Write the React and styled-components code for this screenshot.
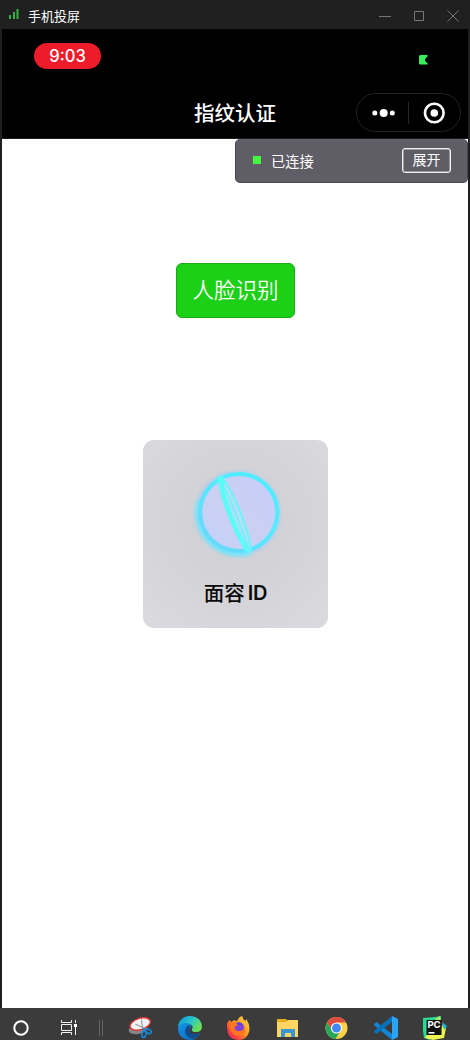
import React from 'react';
import styled, { createGlobalStyle } from 'styled-components';

const Global = createGlobalStyle`
  * { box-sizing: border-box; }
  body { margin: 0; background: #202020; font-family: Inter, "Noto Sans CJK SC", sans-serif; }
  svg { display: block; flex: none; }
`;

const Window = styled.div`
  width: 470px;
  height: 1040px;
  display: flex;
  flex-direction: column;
  background: #202020;
  overflow: hidden;
`;

const TitleBar = styled.header`
  height: 29px;
  flex: none;
  display: flex;
  align-items: center;
  padding: 2px 11px 0 9px;
  color: #fff;
`;

const WindowName = styled.span`
  margin-left: 9px;
  font: 400 13px/18px "Noto Sans CJK SC", sans-serif;
  flex: 1;
`;

const Controls = styled.div`
  display: flex;
  gap: 22px;
`;

const Phone = styled.main`
  flex: 1;
  margin: 0 2px;
  background: #fff;
  display: flex;
  flex-direction: column;
  align-items: center;
`;

const PhoneTop = styled.div`
  width: 100%;
  height: 110px;
  flex: none;
  background: #000;
  border-bottom: 1px solid #1c1c1c;
`;

const StatusBar = styled.div`
  height: 58px;
  display: flex;
  justify-content: space-between;
  padding: 14px 40px 0 32px;
`;

const Clock = styled.div`
  width: 67px;
  height: 26px;
  border-radius: 13px;
  background: #ee1c2b;
  color: #fff;
  font: 500 16.6px/26px Inter, sans-serif;
  text-align: center;
`;

const NavBar = styled.div`
  height: 51px;
  display: grid;
  grid-template-columns: 1fr auto 1fr;
  align-items: center;
  padding: 0 7px;
`;

const PageTitle = styled.h1`
  grid-column: 2;
  margin: 0;
  padding-bottom: 2px;
  color: #fff;
  font: 500 20.5px/30px "Noto Sans CJK SC", sans-serif;
`;

const Capsule = styled.div`
  justify-self: end;
  width: 105px;
  height: 39px;
  border: 1px solid #232323;
  border-radius: 20px;
  display: flex;
  align-items: center;
  padding-left: 15px;
`;

const Divider = styled.span`
  width: 1px;
  height: 22px;
  margin: 0 14px 0 12px;
  background: #262626;
`;

const Connection = styled.div`
  align-self: flex-end;
  width: 233px;
  height: 44px;
  flex: none;
  border: 1px solid #494850;
  border-top-color: #5f5d66;
  border-radius: 5px;
  background: #5f5d66;
  display: flex;
  align-items: center;
  padding: 0 16px 1px 17px;
  color: #fff;
  font: 400 14px/20px "Noto Sans CJK SC", sans-serif;
`;

const ConnectedDot = styled.span`
  width: 8px;
  height: 8px;
  margin: 0 10px 1px 0;
  background: #43f83d;
`;

const ConnectedText = styled.span`
  flex: 1;
  font-size: 14.3px;
`;

const ExpandButton = styled.button`
  width: 49px;
  height: 25px;
  border: 1.5px solid #f0f0f3;
  box-shadow: inset 0 0 0 0.5px #d8d8dc;
  border-radius: 3px;
  padding: 0 0 2px;
  background: transparent;
  color: #fff;
  font: 400 14px/19px "Noto Sans CJK SC", sans-serif;
`;

const FaceButton = styled.button`
  width: 119px;
  height: 55px;
  flex: none;
  margin: 80px 0 0 1px;
  border: 1px solid #19aa17;
  border-radius: 6px;
  padding: 0 0 3px;
  background: #1cd016;
  color: #fff;
  font: 350 21.5px/30px "Noto Sans CJK SC", sans-serif;
`;

const FaceCard = styled.section`
  width: 185px;
  height: 188px;
  flex: none;
  margin: 122px 0 0 1px;
  border-radius: 11px;
  background: radial-gradient(circle at 50% 45%, #d0d0d4 0, #d4d3d7 50%, #dbdadf 100%);
  display: flex;
  flex-direction: column;
  align-items: center;
`;

const FaceLabel = styled.div`
  display: flex;
  gap: 3px;
  color: #0b0b0c;
  font: 500 20.5px/28px "Noto Sans CJK SC", sans-serif;
`;

const Latin = styled.span`
  padding-top: 1px;
  font: 600 20px/28px Inter, sans-serif;
  letter-spacing: -0.3px;
`;

const TaskBar = styled.footer`
  height: 32px;
  flex: none;
  display: flex;
  align-items: flex-start;
  padding-top: 8px;
  background: #3b3b3b;
`;

const SystemItems = styled.div`
  width: 128px;
  flex: none;
  display: flex;
  gap: 24px;
  padding-left: 9px;
`;

const Apps = styled.div`
  display: flex;
  gap: 25px;
`;

const SignalIcon = () => (
  <svg width="10" height="14" viewBox="0 0 10 14" fill="#2fb344">
    <path d="M0 6h2v4H0zM4 3h2v7H4zM7.5 0h2v10h-2z" />
  </svg>
);

const ControlIcon = ({ d }) => (
  <svg width="12" height="12" viewBox="0 0 12 12" fill="none" stroke="#777">
    <path d={d} />
  </svg>
);

const BatteryIcon = () => (
  <svg width="9" height="10" viewBox="0 0 9 10" style={{ marginTop: 12 }}>
    <path d="M1 0H8.5V1.5L6 4V6L8.5 8V9.5H1L0 9V1z" fill="#35ef5c" />
  </svg>
);

const DotsIcon = () => (
  <svg width="24" height="10" viewBox="0 0 24 10" fill="#fff">
    <circle cx="2.8" cy="5" r="2.5" />
    <circle cx="11.7" cy="5" r="4" />
    <circle cx="20.3" cy="5" r="2.5" />
  </svg>
);

const TargetIcon = () => (
  <svg width="22" height="22" viewBox="0 0 22 22">
    <circle cx="11.3" cy="11" r="9.3" fill="none" stroke="#fff" strokeWidth="2.6" />
    <circle cx="11.3" cy="11" r="3.8" fill="#fff" />
  </svg>
);

const FaceRing = () => (
  <svg width="185" height="138" viewBox="0 0 185 138">
    <defs>
      <filter id="glow" x="-20%" y="-20%" width="140%" height="140%">
        <feGaussianBlur stdDeviation="2" />
      </filter>
      <filter id="soft" x="-20%" y="-20%" width="140%" height="140%">
        <feGaussianBlur stdDeviation="0.7" />
      </filter>
      <linearGradient id="disc" x1="0" y1="1" x2="1" y2="0">
        <stop stopColor="#c3d0fa" />
        <stop offset=".45" stopColor="#cbd0f2" />
        <stop offset="1" stopColor="#c6ccfa" />
      </linearGradient>
      <linearGradient id="ring" x1="1" y1="0" x2="0" y2="1">
        <stop stopColor="#4cf0ff" />
        <stop offset=".5" stopColor="#55e9fd" />
        <stop offset="1" stopColor="#6fd2fb" />
      </linearGradient>
    </defs>
    <circle cx="94.8" cy="73.3" r="39.5" fill="none" stroke="#9ccbfa" strokeWidth="4.5" filter="url(#glow)" />
    <path d="M57 60A41 41 0 0 0 107 112" fill="none" stroke="#5cf0ff" strokeWidth="4" filter="url(#glow)" />
    <circle cx="95.8" cy="72.5" r="38.5" fill="url(#disc)" stroke="url(#ring)" strokeWidth="4" filter="url(#soft)" />
    <g transform="rotate(-21.5 92 75)" filter="url(#soft)">
      <ellipse cx="92" cy="75" rx="6" ry="40" fill="#a6e8f8" fillOpacity=".65" stroke="#66f5fb" strokeWidth="2" />
      <path d="M91.5 36Q84 74 90.5 113" fill="none" stroke="#5bfbf8" strokeWidth="4.5" />
      <path d="M92 37Q94 75 92.5 112" fill="none" stroke="#68f1f8" strokeWidth="1.4" />
      <path d="M91.8 36v4" stroke="#58fff4" strokeWidth="6" strokeLinecap="round" />
    </g>
    <path d="M105.5 102v9" stroke="#1de9ff" strokeWidth="3" filter="url(#soft)" />
  </svg>
);

const CortanaIcon = () => (
  <svg width="24" height="24" viewBox="0 0 24 24">
    <circle cx="12" cy="12" r="6.7" fill="none" stroke="#fff" strokeWidth="2" />
  </svg>
);

const TaskViewIcon = () => (
  <svg width="24" height="24" viewBox="0 0 24 24" fill="none" stroke="#f4f4f4">
    <path d="M4.5 4v2.5h10V4M4.5 19v-2.5h10V19M4.5 8.5h10v6h-10zM18.5 4v3M18.5 11v8" />
    <path d="M17 8h3v3h-3z" fill="#fff" stroke="none" />
  </svg>
);

const TaskSeparator = () => (
  <svg width="6" height="24" viewBox="0 0 6 24" stroke="#666" style={{ marginLeft: -7 }}>
    <path d="M1.5 4v16M4.5 4v16" />
  </svg>
);

const SnipIcon = () => (
  <svg width="25" height="24" viewBox="0 0 25 24" fill="none">
    <ellipse cx="10" cy="13" rx="9.5" ry="5" transform="rotate(-12 10 13)" fill="#858585" />
    <ellipse cx="12.2" cy="8" rx="10.5" ry="5.6" transform="rotate(-17 12.2 8)" fill="#f3f3f3" stroke="#df3a3a" strokeWidth="1.4" />
    <path d="M13.5 3.5l1 9M7.5 8l8 4" stroke="#959ca0" strokeWidth="1.2" />
    <ellipse cx="16" cy="18" rx="2" ry="3.4" transform="rotate(12 16 18)" stroke="#1785d1" strokeWidth="1.7" />
    <ellipse cx="20.3" cy="15.3" rx="3.2" ry="2" transform="rotate(22 20.3 15.3)" stroke="#1785d1" strokeWidth="1.7" />
    <path d="M15 12l2 3" stroke="#1785d1" strokeWidth="1.5" />
  </svg>
);

const EdgeIcon = () => (
  <svg width="24" height="24" viewBox="0 0 24 24">
    <defs>
      <linearGradient id="edge-top" x1="0" x2="1" y2=".5">
        <stop stopColor="#0b93da" />
        <stop offset=".55" stopColor="#28c5cd" />
        <stop offset="1" stopColor="#6bdf56" />
      </linearGradient>
      <linearGradient id="edge-base" y2="1">
        <stop stopColor="#1593e6" />
        <stop offset="1" stopColor="#0866bc" />
      </linearGradient>
    </defs>
    <path d="M0 12Q1 5 8 6Q14 7 13 12Q9 13 12 17Q16 20 22 17Q19 24 12 24Q0 23 0 12z" fill="url(#edge-base)" />
    <path d="M0 11C1-4 23-3 24 10Q24 16 18 16Q13 16 14 13Q16 10 12 8Q5 5 0 11z" fill="url(#edge-top)" />
    <path d="M9 10Q4 18 12 22Q18 24 22 17Q17 20 13 17Q10 15 12 12Q13 8 9 10z" fill="#124b89" />
  </svg>
);

const FirefoxIcon = () => (
  <svg width="24" height="24" viewBox="0 0 24 24">
    <defs>
      <linearGradient id="fox" x1="1" y1="0" x2="0" y2="1">
        <stop stopColor="#ffe34d" />
        <stop offset=".45" stopColor="#ff9720" />
        <stop offset=".75" stopColor="#ff3d45" />
        <stop offset="1" stopColor="#f32282" />
      </linearGradient>
    </defs>
    <g transform="translate(-.7)">
      <path d="M1 7L3 4L5 6L8 4Q9 5 11 5Q12 1 16 0Q16 3 19 5L20 3Q24 9 23 15Q21 24 12 24Q1 23 1 13Q0 10 1 7z" fill="url(#fox)" />
      <circle cx="12.5" cy="11.5" r="5.3" fill="#8140dc" />
      <path d="M3 7L10 6L12 9L8 11Q9 16 14 15Q18 14 18 10Q20 15 17 18Q11 22 6 17Q2 13 3 7z" fill="#ff761c" />
      <path d="M10 7Q14 5 17 9Q13 8 12 10z" fill="#5b48dc" />
    </g>
  </svg>
);

const FolderIcon = () => (
  <svg width="24" height="24" viewBox="0 0 24 24">
    <path d="M1 3h9l2 2h10v16H1z" fill="#e9ad20" />
    <path d="M1 6h9l2-2h10v17H1z" fill="#ffd664" />
    <path d="M5 13h14v8h-4v-4H9v4H5z" fill="#3798d5" />
  </svg>
);

const ChromeIcon = () => (
  <svg width="24" height="24" viewBox="0 0 24 24">
    <g transform="translate(-.5)">
      <circle cx="12" cy="12" r="11" fill="#fbd246" />
      <path d="M2.5 6.5A11 11 0 0 1 21.5 6.5H12L8 15z" fill="#df4b3f" />
      <path d="M2.5 6.5A11 11 0 0 0 11 23l5-8-8 0z" fill="#28a65a" />
      <circle cx="12" cy="12" r="5.6" fill="#fff" />
      <circle cx="12" cy="12" r="4.5" fill="#4389f5" />
    </g>
  </svg>
);

const CodeIcon = () => (
  <svg width="24" height="24" viewBox="0 0 24 24">
    <path d="M0 8l2.5-2L18 18v6L0 9z" fill="#1187d5" />
    <path d="M0 16l2.5 2L18 6V0L0 15z" fill="#0871b9" />
    <path d="M18 0l6 3v18l-6 3z" fill="#2aa4f3" />
  </svg>
);

const PyCharmIcon = () => (
  <svg width="24" height="24" viewBox="0 0 24 24">
    <path d="M0 2L12 1L18 0V6L7 24L1 22L0 15z" fill="#2bd991" />
    <path d="M16 17L20 8L23 12L21 22L10 24L2 22L5 17z" fill="#eef54e" />
    <path d="M12 3L17 0L18 6z" fill="#b6ec5b" />
    <path d="M19 6l5 4-3 4z" fill="#16b5d8" />
    <path d="M3.5 4h15v15h-15z" fill="#101010" />
    <text x="4.4" y="12" fill="#fff" fontFamily="Inter, sans-serif" fontSize="9.6" fontWeight="700">PC</text>
    <path d="M5.5 16h6v1.6h-6z" fill="#fff" />
  </svg>
);

export default function App() {
  return (
    <Window>
      <Global />
      <TitleBar>
        <SignalIcon />
        <WindowName>手机投屏</WindowName>
        <Controls>
          <ControlIcon d="M0 6.5H12" />
          <ControlIcon d="M1.5 1.5h9v9h-9z" />
          <ControlIcon d="M.5.5l11 11M11.5.5L.5 11.5" />
        </Controls>
      </TitleBar>
      <Phone>
        <PhoneTop>
          <StatusBar>
            <Clock>9:03</Clock>
            <BatteryIcon />
          </StatusBar>
          <NavBar>
            <PageTitle>指纹认证</PageTitle>
            <Capsule>
              <DotsIcon />
              <Divider />
              <TargetIcon />
            </Capsule>
          </NavBar>
        </PhoneTop>
        <Connection>
          <ConnectedDot />
          <ConnectedText>已连接</ConnectedText>
          <ExpandButton>展开</ExpandButton>
        </Connection>
        <FaceButton>人脸识别</FaceButton>
        <FaceCard>
          <FaceRing />
          <FaceLabel>面容<Latin>ID</Latin></FaceLabel>
        </FaceCard>
      </Phone>
      <TaskBar>
        <SystemItems>
          <CortanaIcon />
          <TaskViewIcon />
          <TaskSeparator />
        </SystemItems>
        <Apps>
          <SnipIcon />
          <EdgeIcon />
          <FirefoxIcon />
          <FolderIcon />
          <ChromeIcon />
          <CodeIcon />
          <PyCharmIcon />
        </Apps>
      </TaskBar>
    </Window>
  );
}
